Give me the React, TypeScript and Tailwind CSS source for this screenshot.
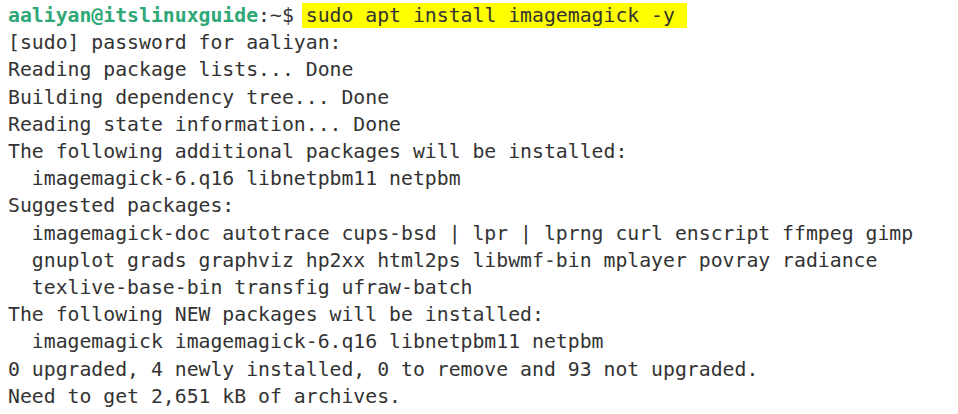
const lines = [
    "[sudo] password for aaliyan:",
    "Reading package lists... Done",
    "Building dependency tree... Done",
    "Reading state information... Done",
    "The following additional packages will be installed:",
    "  imagemagick-6.q16 libnetpbm11 netpbm",
    "Suggested packages:",
    "  imagemagick-doc autotrace cups-bsd | lpr | lprng curl enscript ffmpeg gimp",
    "  gnuplot grads graphviz hp2xx html2ps libwmf-bin mplayer povray radiance",
    "  texlive-base-bin transfig ufraw-batch",
    "The following NEW packages will be installed:",
    "  imagemagick imagemagick-6.q16 libnetpbm11 netpbm",
    "0 upgraded, 4 newly installed, 0 to remove and 93 not upgraded.",
    "Need to get 2,651 kB of archives.",
];

export default function App() {
    return (
        <div className="w-[958px] h-[414px] bg-white overflow-hidden">
            <div
                className="pl-[8px] pt-[2px] text-[19.8px] leading-[27.2px] text-[#333333] whitespace-pre"
                style={{ fontFamily: '"DejaVu Sans Mono", "Liberation Mono", monospace' }}
            >
                {/* PROMPT */}
                <div>
                    <span className="font-bold text-[#2ea877]">aaliyan@itslinuxguide</span>
                    <span>:~$ </span>
                    <span className="bg-[#ffff00] -ml-[4px] pl-[4px] py-[1px]">sudo apt install imagemagick -y </span>
                </div>

                {/* OUTPUT */}
                {lines.map((line, i) => (
                    <div key={i}>{line}</div>
                ))}
            </div>
        </div>
    );
}
